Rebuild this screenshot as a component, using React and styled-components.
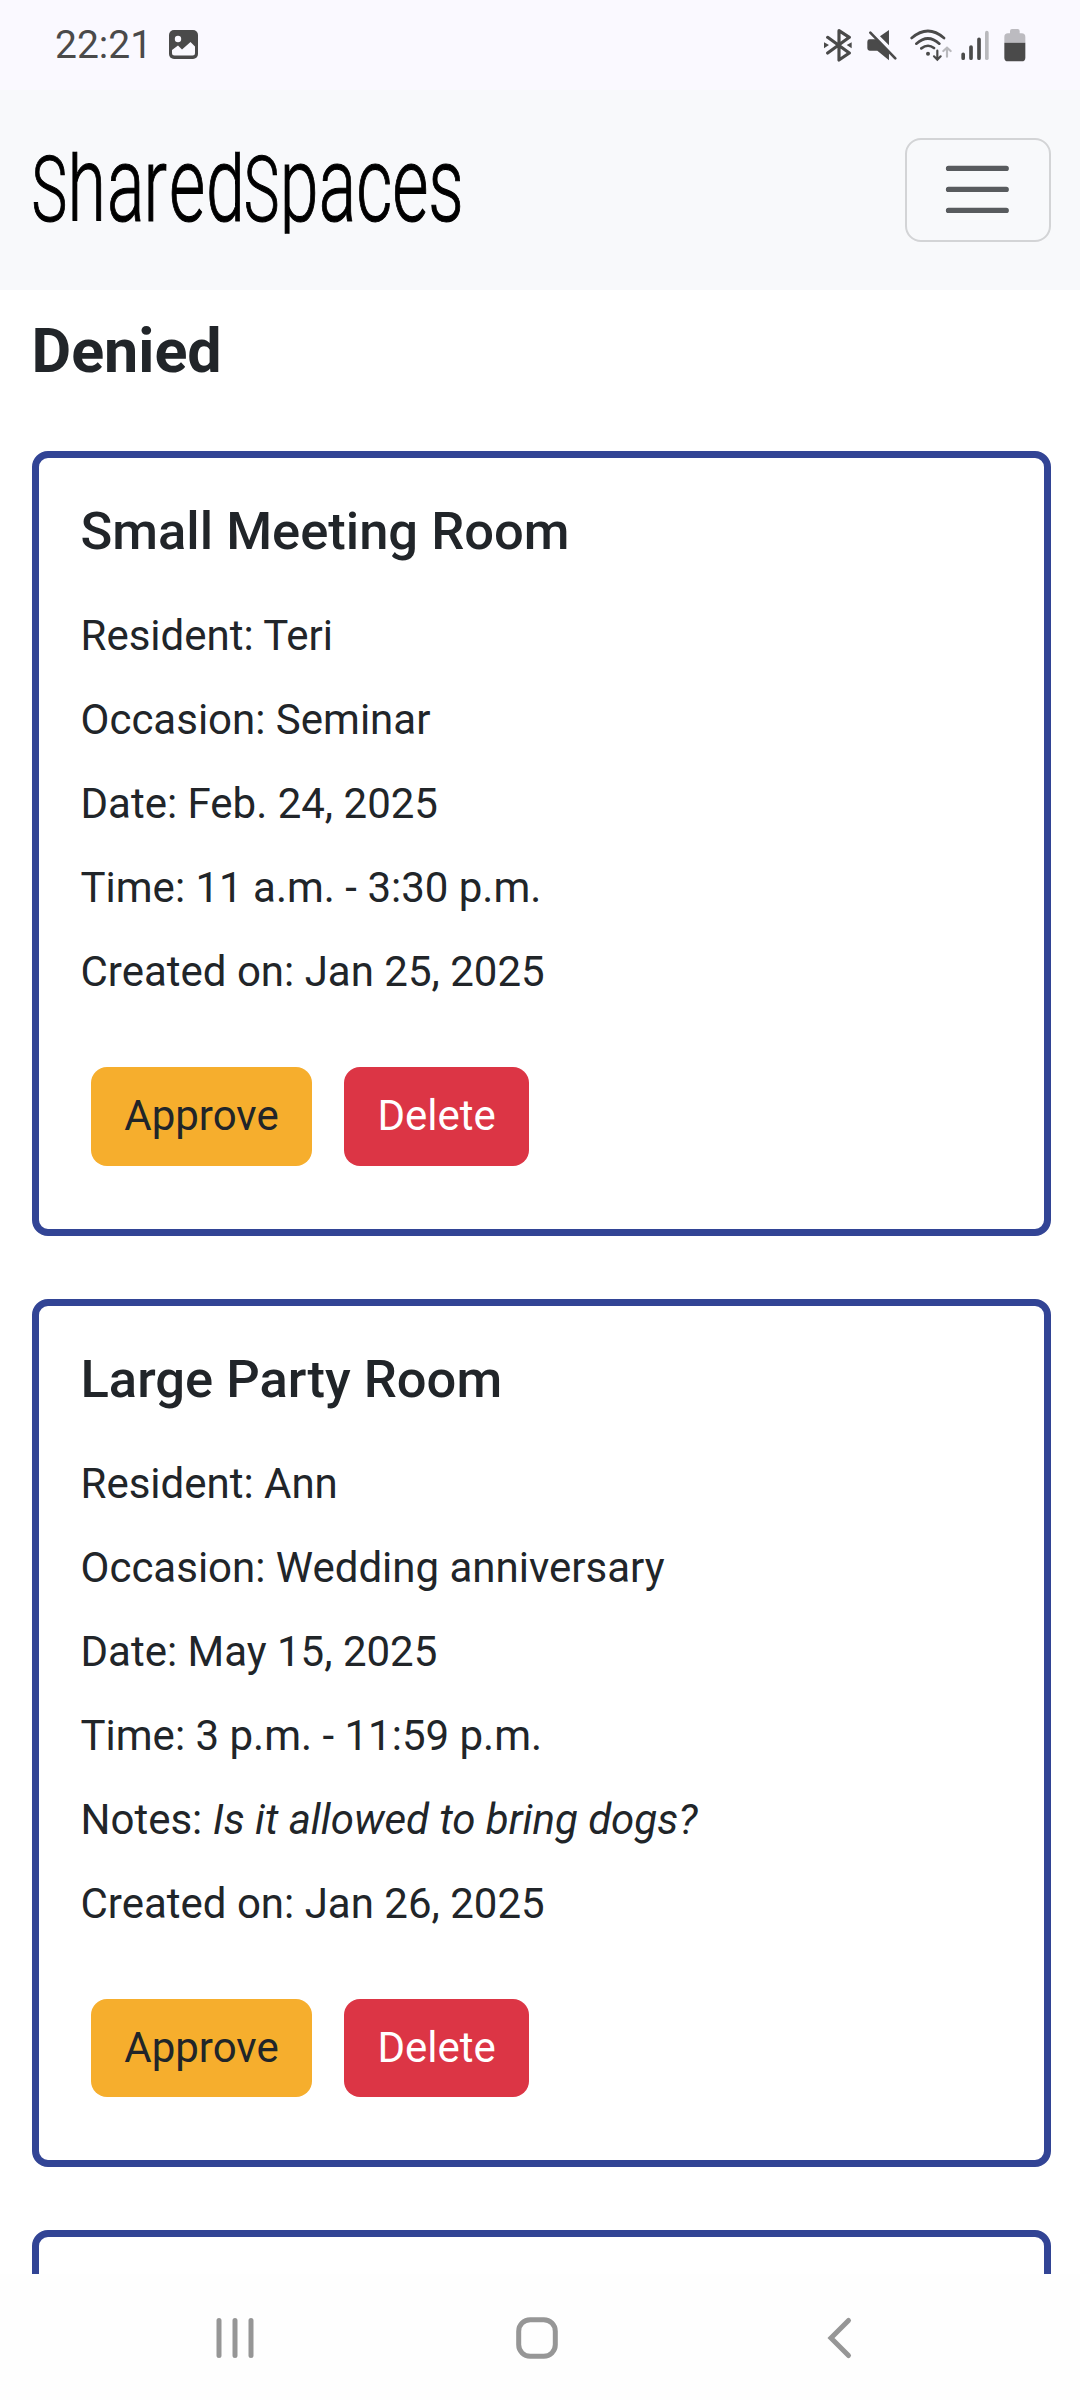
import React from "react";
import styled, { createGlobalStyle } from "styled-components";

const GlobalStyle = createGlobalStyle`
  *, *::before, *::after { box-sizing: border-box; }
  body { margin: 0; background: #fff; }
`;

const Screen = styled.div`
  width: 1080px;
  height: 2400px;
  display: flex;
  flex-direction: column;
  overflow: hidden;
  background: #fff;
  color: #212529;
  font-family: Roboto, "Liberation Sans", sans-serif;
  font-size: 42px;
  line-height: 63px;
`;

const StatusBar = styled.div`
  flex: none;
  height: 90px;
  padding: 0 54.300px 1px 55px;
  display: flex;
  align-items: center;
  justify-content: space-between;
  background: #faf9ff;
  color: #4a4a4a;
`;

const StatusGroup = styled.div`
  display: flex;
  align-items: center;
  gap: ${(p) => p.$gap}px;
`;

const Clock = styled.span`
  font-size: 39px;
  line-height: 46px;
`;

const Icon = styled.svg`
  display: block;
  flex: none;
`;

const Navbar = styled.header`
  flex: none;
  height: 200px;
  padding: 0 29px 0 32px;
  display: flex;
  align-items: center;
  justify-content: space-between;
  background: #f8f9fb;
`;

const Toggler = styled.button`
  width: 146px;
  height: 104px;
  padding: 0 2px 1px 0;
  display: flex;
  align-items: center;
  justify-content: center;
  border: 2px solid #d3d4d6;
  border-radius: 16px;
  background: transparent;
`;

const Content = styled.main`
  flex: none;
  height: 1984px;
  padding: 0 29px 0 31.500px;
  overflow: hidden;
`;

const Heading = styled.h1`
  margin: 24px 0 63px;
  font-size: 61px;
  line-height: 74px;
  font-weight: 700;
`;

const CardList = styled.div`
  display: flex;
  flex-direction: column;
  gap: 63px;
`;

const Card = styled.article`
  min-height: 300px;
  padding: 42px;
  border: 7px solid #324495;
  border-radius: 16px;
`;

const CardTitle = styled.h2`
  margin: 0 0 41px;
  font-size: 52.5px;
  line-height: 63px;
  font-weight: 500;
`;

const Detail = styled.p`
  margin: 0 0 21px;
`;

const Actions = styled.div`
  display: flex;
  gap: 32px;
  padding: 43px 10px 21px;
`;

const Button = styled.button`
  height: 98.6px;
  padding: 0 33px 1.6px 33.8px;
  border: 0;
  border-radius: 16px;
  font: inherit;
  background: ${(p) => (p.$danger ? "#dc3545" : "#f6ae2d")};
  color: ${(p) => (p.$danger ? "#fff" : "#212529")};
`;

const SystemNav = styled.nav`
  flex: none;
  height: 126px;
  padding: 2px 216px 0;
  display: flex;
  align-items: center;
  justify-content: space-between;
  background: #fefefe;
`;

const HomeButton = styled.div`
  margin-right: 6px;
`;

const Logo = () => (
  <Icon width="440" height="150" viewBox="32 115 440 150">
    <defs>
      <clipPath id="wordmark">
        <rect x="32" y="151.700" width="440" height="82" />
      </clipPath>
    </defs>
    <g clipPath="url(#wordmark)">
      <text
        transform="translate(0 221) scale(0.66 1)"
        fontFamily="Roboto, sans-serif"
        fontWeight="300"
        fontSize="106"
        fill="#000"
        stroke="#000"
        strokeWidth="1.1"
        x="47.9 102.4 162 217.6 256 312.2 369.2 423.8 483 539.8 594.5 648.9"
      >
        <tspan fontSize="91">S</tspan>hared<tspan fontSize="91">S</tspan>paces
      </text>
    </g>
  </Icon>
);

const PictureIcon = () => (
  <Icon width="30" height="30" viewBox="0 0 30 30">
    <rect width="29" height="29" rx="5" fill="#4a4a4a" />
    <circle cx="9" cy="9" r="3.2" fill="#faf9ff" />
    <path d="M3 20 9 15.5l4 4L21.500 12 26 16.500V23a2.500 2.500 0 0 1-2.500 2.500h-18A2.500 2.500 0 0 1 3 23z" fill="#faf9ff" />
  </Icon>
);

const BluetoothIcon = () => (
  <Icon width="35" height="34" viewBox="68 82 105 102">
    <path d="M82 110 147 157 116 178V90L147 110 82 157" fill="none" stroke="#4a4a4a" strokeWidth="9.500" strokeLinejoin="round" strokeLinecap="round" />
    <path d="M71 124.500 86 133 71 143zM154 124.500 139 133 154 143z" fill="#4a4a4a" />
  </Icon>
);

const MutedIcon = () => (
  <Icon width="34.300" height="34" viewBox="200 82 103 102">
    <path d="M208 116H229L266 153V179L231 150H208Q201 150 201 143V123Q201 116 208 116zM239 107 266 88V134z" fill="#4a4a4a" />
    <path d="M210 96 285 173" stroke="#4a4a4a" strokeWidth="8" strokeLinecap="round" />
  </Icon>
);

const WifiIcon = () => (
  <Icon width="42" height="34" viewBox="330 82 126 102">
    <g fill="none" stroke="#4a4a4a" strokeWidth="8" strokeLinecap="round">
      <path d="M335 112Q384 70 432 112M349 129Q384 98 418 129M364 143Q384 128 402 142" />
      <path d="M412 150V176M402 167 412 177 422 167" strokeWidth="6.500" />
    </g>
    <circle cx="384" cy="159" r="6" fill="#4a4a4a" />
    <path d="M441 168V142M430 151 441 141 452 151" fill="none" stroke="#b9b9bd" strokeWidth="6.500" strokeLinecap="round" />
  </Icon>
);

const SignalIcon = () => (
  <Icon width="33.700" height="34" viewBox="483 82 101 102">
    <g stroke="#4a4a4a" strokeWidth="11" strokeLinecap="round">
      <path d="M489.500 161V172.500M513 139V172.500M537 116V172.500" />
      <path d="M560.500 96V172.500" stroke="#b9b9bd" />
    </g>
  </Icon>
);

const BatteryIcon = () => (
  <Icon width="22" height="34" viewBox="611 82 66 102">
    <path d="M612 126V109Q612 98 623 98H629V91Q629 85 635 85H652Q658 85 658 91V98H664Q675 98 675 109V126z" fill="#bcbbc0" />
    <path d="M612 126H675V171Q675 182 664 182H623Q612 182 612 171z" fill="#4a4a4a" />
  </Icon>
);

const MenuIcon = () => (
  <Icon width="78.75" height="78.75" viewBox="0 0 30 30">
    <path d="M4 7h22M4 15h22M4 23h22" stroke="#585b5e" strokeWidth="2" strokeLinecap="round" />
  </Icon>
);

const RecentsIcon = () => (
  <Icon width="38" height="44" viewBox="0 0 38 44">
    <path d="M3 4.500v35M19 4.500v35M35 4.500v35" stroke="#969696" strokeWidth="5" strokeLinecap="round" />
  </Icon>
);

const HomeIcon = () => (
  <Icon width="42" height="44" viewBox="0 0 42 44">
    <rect x="2.700" y="3.700" width="36.600" height="36.600" rx="11.500" fill="none" stroke="#969696" strokeWidth="5" />
  </Icon>
);

const BackIcon = () => (
  <Icon width="38" height="44" viewBox="826 2316 38 44">
    <path d="M848.500 2320.500 831 2338 848.500 2355.500" fill="none" stroke="#969696" strokeWidth="5" strokeLinecap="round" />
  </Icon>
);

const bookings = [
  {
    room: "Small Meeting Room",
    details: [
      ["Resident", "Teri"],
      ["Occasion", "Seminar"],
      ["Date", "Feb. 24, 2025"],
      ["Time", "11 a.m. - 3:30 p.m."],
      ["Created on", "Jan 25, 2025"],
    ],
  },
  {
    room: "Large Party Room",
    details: [
      ["Resident", "Ann"],
      ["Occasion", "Wedding anniversary"],
      ["Date", "May 15, 2025"],
      ["Time", "3 p.m. - 11:59 p.m."],
      ["Notes", "Is it allowed to bring dogs?"],
      ["Created on", "Jan 26, 2025"],
    ],
  },
];

const BookingCard = ({ booking }) => (
  <Card>
    <CardTitle>{booking.room}</CardTitle>
    {booking.details.map(([label, value]) => (
      <Detail key={label}>
        {label}: {label === "Notes" ? <em>{value}</em> : value}
      </Detail>
    ))}
    <Actions>
      <Button>Approve</Button>
      <Button $danger>Delete</Button>
    </Actions>
  </Card>
);

export default function App() {
  return (
    <>
      <GlobalStyle />
      <Screen>
        <StatusBar>
          <StatusGroup $gap={17}>
            <Clock>22:21</Clock>
            <PictureIcon />
          </StatusGroup>
          <StatusGroup $gap={9}>
            <BluetoothIcon />
            <MutedIcon />
            <WifiIcon />
            <SignalIcon />
            <BatteryIcon />
          </StatusGroup>
        </StatusBar>
        <Navbar>
          <Logo />
          <Toggler aria-label="Menu">
            <MenuIcon />
          </Toggler>
        </Navbar>
        <Content>
          <Heading>Denied</Heading>
          <CardList>
            {bookings.map((b) => (
              <BookingCard key={b.room} booking={b} />
            ))}
            <Card />
          </CardList>
        </Content>
        <SystemNav>
          <RecentsIcon />
          <HomeButton>
            <HomeIcon />
          </HomeButton>
          <BackIcon />
        </SystemNav>
      </Screen>
    </>
  );
}
